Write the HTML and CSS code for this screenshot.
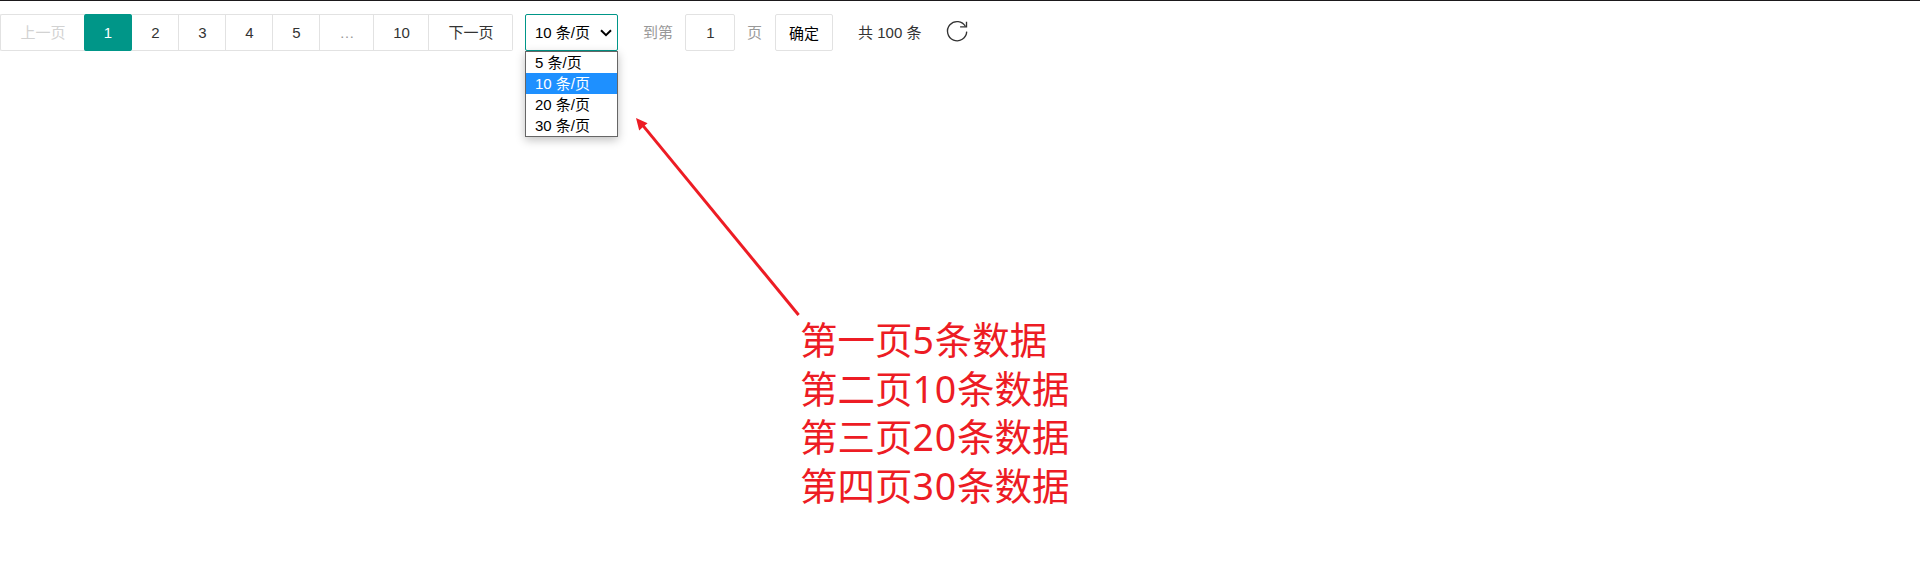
FILE: index.html
```html
<!DOCTYPE html>
<html lang="zh-CN">
<head>
<meta charset="utf-8">
<title>分页</title>
<link rel="stylesheet" href="styles.css">
</head>
<body>
<nav class="pager">
  <div class="pages">
    <a class="page page-text disabled">上一页</a>
    <a class="page active">1</a>
    <a class="page">2</a>
    <a class="page">3</a>
    <a class="page">4</a>
    <a class="page">5</a>
    <a class="page ellipsis">…</a>
    <a class="page page-wide">10</a>
    <a class="page page-text next">下一页</a>
  </div>
  <div class="limit">
    <div class="select"><span>10 条/页</span>
      <svg class="chevron" width="12" height="8" viewBox="0 0 12 8"><path d="M1 1.2L6 6.1L11 1.2" fill="none" stroke="#000" stroke-width="2"/></svg>
    </div>
    <div class="menu">
      <div class="option">5 条/页</div>
      <div class="option selected">10 条/页</div>
      <div class="option">20 条/页</div>
      <div class="option">30 条/页</div>
    </div>
  </div>
  <div class="jump">
    <span class="muted">到第</span>
    <span class="field">1</span>
    <span class="muted">页</span>
    <span class="confirm">确定</span>
  </div>
  <span class="total">共 100 条</span>
  <svg class="refresh" width="24" height="24" viewBox="0 0 24 24" fill="none" stroke="#333" stroke-width="1.35"><path d="M20.5 7.5A9.6 9.6 0 1 0 21.7 12.6"/><path d="M21.5 2.8V7.9H15.1"/></svg>
</nav>
<svg class="arrow" width="170" height="205" viewBox="630 113 170 205"><path d="M643 125.6L798.6 315" stroke="#ed1c24" stroke-width="3"/><path d="M636 118L647.6 123.3L643.8 126.2L639.2 130.6Z" fill="#ed1c24"/></svg>
<div class="note">
  <div class="line">第一页<span class="num">5</span>条数据</div>
  <div class="line">第二页<span class="num">10</span>条数据</div>
  <div class="line">第三页<span class="num">20</span>条数据</div>
  <div class="line">第四页<span class="num">30</span>条数据</div>
</div>
</body>
</html>
```

FILE: styles.css
```css
* { box-sizing: border-box; }
body {
  margin: 0;
  height: 563px;
  overflow: hidden;
  background: #fff;
  border-top: 1px solid #1b191b;
  color: #333;
  font: 15px "Liberation Sans", "Noto Sans CJK SC", sans-serif;
}
.pager { display: flex; height: 37px; margin-top: 13px; line-height: 35px; white-space: nowrap; }
.pages { display: flex; }
.page {
  width: 47px;
  height: 37px;
  padding-left: 1px;
  border: 1px solid #e2e2e2;
  border-left: 0;
  text-align: center;
}
.page-text { width: 84px; }
.disabled { border-left: 1px solid #e2e2e2; border-right: 0; border-radius: 2px 0 0 2px; color: #d2d2d2; }
.active { width: 48px; border-color: #009688; border-radius: 2px; background: #009688; color: #fff; }
.ellipsis { width: 54px; color: #999; }
.page-wide { width: 55px; }
.next { width: 84px; border-radius: 0 2px 2px 0; }
.limit { position: relative; width: 93px; margin-left: 12px; color: #000; }
.select {
  display: flex;
  align-items: center;
  justify-content: space-between;
  height: 37px;
  padding: 0 5px 0 9px;
  border: 1px solid #009688;
  border-radius: 2px;
}
.menu {
  position: absolute;
  top: 37px;
  left: 0;
  width: 93px;
  border: 1px solid #666;
  background: #fff;
  box-shadow: 0 3px 9px rgba(0, 0, 0, .25);
}
.option { height: 21px; padding-left: 9px; line-height: 21px; }
.selected { background: #1e90ff; color: #fff; }
.jump { display: flex; margin-left: 25px; line-height: 37px; }
.muted { color: #999; }
.field, .confirm { height: 37px; border: 1px solid #e2e2e2; border-radius: 2px; line-height: 35px; text-align: center; color: #000; }
.field { width: 50px; margin: 0 12px; padding-left: 1px; color: #333; }
.confirm { width: 58px; margin-left: 13px; line-height: 37px; }
.total { margin-left: 25px; line-height: 37px; }
.refresh { margin: 5px 0 0 24px; }
.arrow { position: absolute; left: 630px; top: 113px; }
.note {
  position: absolute;
  left: 800px;
  top: 314px;
  color: #ed1c24;
  font: 37.5px/48.5px "Noto Sans CJK SC", sans-serif;
  white-space: nowrap;
}
.line { height: 48.5px; }
.num { font-family: "Noto Sans", sans-serif; line-height: 1; letter-spacing: .8px; }
```
